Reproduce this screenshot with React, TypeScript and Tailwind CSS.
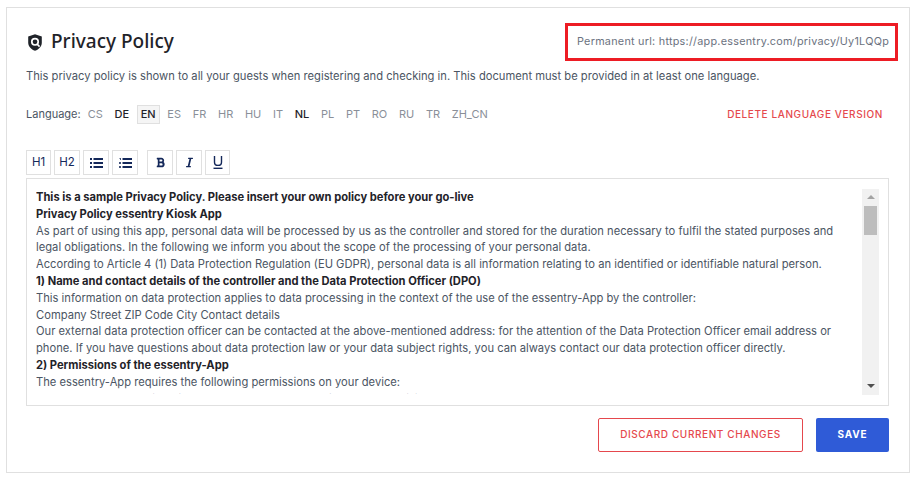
import { FaBold, FaItalic } from "react-icons/fa";

const languages = [
  { code: "CS", has: false },
  { code: "DE", has: true },
  { code: "EN", has: true, active: true },
  { code: "ES", has: false },
  { code: "FR", has: false },
  { code: "HR", has: false },
  { code: "HU", has: false },
  { code: "IT", has: false },
  { code: "NL", has: true },
  { code: "PL", has: false },
  { code: "PT", has: false },
  { code: "RO", has: false },
  { code: "RU", has: false },
  { code: "TR", has: false },
  { code: "ZH_CN", has: false },
];

const policy: { text: string; bold?: boolean }[] = [
  { text: "This is a sample Privacy Policy. Please insert your own policy before your go-live", bold: true },
  { text: "Privacy Policy essentry Kiosk App", bold: true },
  {
    text: "As part of using this app, personal data will be processed by us as the controller and stored for the duration necessary to fulfil the stated purposes and legal obligations. In the following we inform you about the scope of the processing of your personal data.",
  },
  {
    text: "According to Article 4 (1) Data Protection Regulation (EU GDPR), personal data is all information relating to an identified or identifiable natural person.",
  },
  { text: "1) Name and contact details of the controller and the Data Protection Officer (DPO)", bold: true },
  { text: "This information on data protection applies to data processing in the context of the use of the essentry-App by the controller:" },
  { text: "Company Street ZIP Code City Contact details" },
  {
    text: "Our external data protection officer can be contacted at the above-mentioned address: for the attention of the Data Protection Officer email address or phone. If you have questions about data protection law or your data subject rights, you can always contact our data protection officer directly.",
  },
  { text: "2) Permissions of the essentry-App", bold: true },
  { text: "The essentry-App requires the following permissions on your device:" },
  { text: "Camera: to scan your identity document and to take a picture for the visitor badge" },
];

function ShieldIcon() {
  return (
    <svg viewBox="0 0 16 17" className="ml-[1px] h-[17px] w-4">
      <path
        d="M8 0.3 14.8 2.6V8.4C14.8 12.2 12 15.2 8 16.7 4 15.2 1.2 12.2 1.2 8.4V2.6Z"
        fill="#1f2329"
      />
      <circle cx="8" cy="7.8" r="3.2" fill="none" stroke="#fff" strokeWidth="1.7" />
      <path d="M10 10 12.6 12.6" stroke="#fff" strokeWidth="1.7" />
    </svg>
  );
}

function BulletIcon() {
  return (
    <svg viewBox="0 0 13 10" className="h-[10px] w-[13px]" fill="#14285a">
      <rect x="3.5" y="0" width="9.5" height="2" />
      <rect x="3.5" y="4" width="9.5" height="2" />
      <rect x="3.5" y="8" width="9.5" height="2" />
      <rect x="0" y="0" width="2" height="2" />
      <rect x="0" y="4" width="2" height="2" />
      <rect x="0" y="8" width="2" height="2" />
    </svg>
  );
}

function OrderedIcon() {
  return (
    <svg viewBox="0 0 13 10" className="h-[10px] w-[13px]" fill="#14285a">
      <rect x="3.5" y="0" width="9.5" height="2" />
      <rect x="3.5" y="4" width="9.5" height="2" />
      <rect x="3.5" y="8" width="9.5" height="2" />
      <rect x="0.5" y="0" width="1.5" height="0.8" />
      <rect x="1" y="1.2" width="1" height="0.8" />
      <rect x="0" y="4" width="2" height="0.8" />
      <rect x="0" y="5.2" width="2" height="0.8" />
      <rect x="0" y="8" width="2" height="0.8" />
      <rect x="0" y="9.2" width="2" height="0.8" />
    </svg>
  );
}

function UnderlineIcon() {
  return (
    <svg viewBox="0 0 10 13" className="h-[13px] w-[10px]" fill="none" stroke="#14285a" strokeWidth="1.4">
      <path d="M1.5 0V6.2C1.5 8.2 2.9 9.4 5 9.4 7.1 9.4 8.5 8.2 8.5 6.2V0" />
      <path d="M0.5 12.3H9.5" />
    </svg>
  );
}

function ToolButton({ children, className }: { children: React.ReactNode; className: string }) {
  return (
    <button className={"flex h-[25px] items-center justify-center border border-[#e0e0e0] bg-white text-[11.5px] text-[#14285a] " + className}>
      {children}
    </button>
  );
}

export default function App() {
  return (
    <div className="h-[477px] w-[916px] bg-white pl-[6px] pr-[6px] pt-[7px] font-['Inter',sans-serif]">
      <div className="h-[466px] w-[904px] border border-[#e0e0e0] px-[19px]">
        <div className="-mr-[8px] flex items-center justify-between pt-[15px]">
          <div className="flex items-center gap-2">
            <ShieldIcon />
            <h1 className="-mt-[2px] font-['Noto_Sans',sans-serif] text-[19px] font-medium text-[#1f2329]">Privacy Policy</h1>
          </div>
          <div className="flex h-[38px] w-[333px] items-center border-[3px] border-[#ed1c24] pl-[9px] text-[10.8px] tracking-[0.26px] text-[#6b7280]">
            Permanent url: https://app.essentry.com/privacy/Uy1LQQp
          </div>
        </div>

        <p className="mt-[7px] text-[11.2px] leading-[17px] text-[#4b5563]">
          This privacy policy is shown to all your guests when registering and checking in. This document must be provided in at least one language.
        </p>

        <div className="mt-[20px] flex h-[19px] items-center justify-between pr-[7px]">
          <div className="flex items-center text-[11px]">
            <span className="mr-[3px] text-[#4b5563]">Language:</span>
            {languages.map((l) => (
              <span
                key={l.code}
                className={
                  "mr-[3.7px] flex h-[19px] items-center border px-[3px] " +
                  (l.active ? "border-[#e0e0e0] bg-[#f5f5f5] " : "border-transparent ") +
                  (l.has ? "font-medium text-[#1f2329]" : "text-[#8a8f98]")
                }
              >
                {l.code}
              </span>
            ))}
          </div>
          <button className="text-[10px] font-medium tracking-[0.6px] text-[#e5484d]">DELETE LANGUAGE VERSION</button>
        </div>

        <div className="mt-[26px] flex">
          <ToolButton className="w-[25px]">H1</ToolButton>
          <ToolButton className="ml-[3px] w-[26px]">H2</ToolButton>
          <ToolButton className="ml-[3px] w-[26px]">
            <BulletIcon />
          </ToolButton>
          <ToolButton className="ml-[3px] w-[26px]">
            <OrderedIcon />
          </ToolButton>
          <ToolButton className="ml-[9px] w-[26px]">
            <FaBold size={11} />
          </ToolButton>
          <ToolButton className="ml-[3px] w-[26px]">
            <FaItalic size={11} />
          </ToolButton>
          <ToolButton className="ml-[3px] w-[25px]">
            <UnderlineIcon />
          </ToolButton>
        </div>

        <div className="mt-[3px] flex h-[228px] w-[863px] items-start justify-between border border-[#e0e0e0] px-[9px] pt-[10px]">
          <div className="h-[205px] w-[808px] overflow-hidden text-[11.2px] leading-[16.8px] text-[#4b5563]">
            {policy.map((p, i) => (
              <div key={i} className={p.bold ? "text-[11.15px] font-bold text-[#1f2329]" : ""}>
                {p.text}
              </div>
            ))}
          </div>
          <div className="flex h-[206px] w-[17px] shrink-0 flex-col items-center bg-[#f1f1f1]">
            <div className="mt-[6px] h-0 w-0 border-x-[4px] border-b-[4px] border-x-transparent border-b-[#a3a3a3]" />
            <div className="mt-[7px] h-[29px] w-[13px] bg-[#bdbdbd]" />
            <div className="mb-[7px] mt-auto h-0 w-0 border-x-[4px] border-t-[4px] border-x-transparent border-t-[#505050]" />
          </div>
        </div>

        <div className="mt-3 flex w-[863px] justify-end gap-[13px]">
          <button className="h-[34px] w-[205px] rounded-[2px] border border-[#e5484d] pb-[1px] text-[10px] font-medium tracking-[0.6px] text-[#e5484d]">
            DISCARD CURRENT CHANGES
          </button>
          <button className="h-[34px] w-[73px] rounded-[2px] bg-[#2f5bd7] pb-[1px] text-[10px] font-bold tracking-[0.8px] text-white">SAVE</button>
        </div>
      </div>
    </div>
  );
}
